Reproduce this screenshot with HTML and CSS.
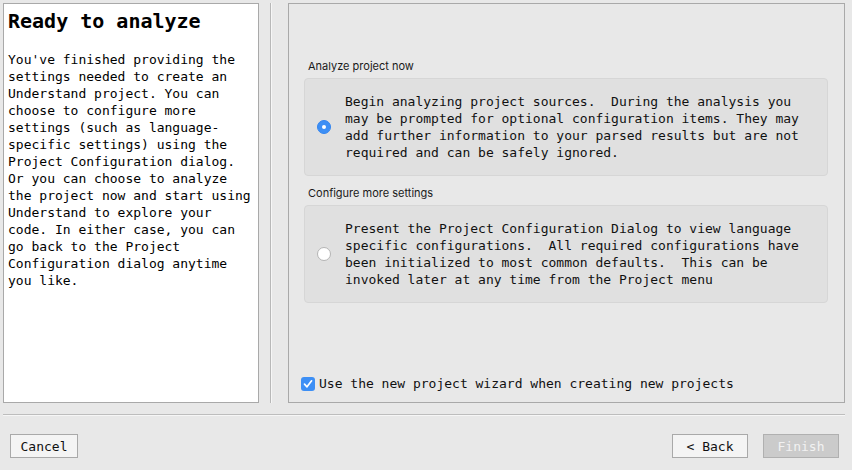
FILE: index.html
```html
<!DOCTYPE html>
<html>
<head>
<meta charset="utf-8">
<link rel="stylesheet" href="styles.css">
</head>
<body>
<div class="window">
  <div class="main">
    <div class="side">
      <h1 class="title">Ready to analyze</h1>
      <p class="intro">You've finished providing the settings needed to create an Understand project. You can choose to configure more settings (such as language-specific settings) using the Project Configuration dialog. Or you can choose to analyze the project now and start using Understand to explore your code. In either case, you can go back to the Project Configuration dialog anytime you like.</p>
    </div>
    <div class="vsep"></div>
    <div class="content">
      <div class="group-label">Analyze project now</div>
      <div class="group">
        <span class="radio checked"></span>
        <div class="group-text">Begin analyzing project sources.&nbsp; During the analysis you<br>may be prompted for optional configuration items. They may<br>add further information to your parsed results but are not<br>required and can be safely ignored.</div>
      </div>
      <div class="group-label second">Configure more settings</div>
      <div class="group">
        <span class="radio"></span>
        <div class="group-text">Present the Project Configuration Dialog to view language<br>specific configurations.&nbsp; All required configurations have<br>been initialized to most common defaults.&nbsp; This can be<br>invoked later at any time from the Project menu</div>
      </div>
      <div class="check-row">
        <span class="checkbox"><svg width="14" height="14" viewBox="0 0 14 14"><path d="M3.5 7.2 L6 9.8 L10.6 3.8" fill="none" stroke="#fff" stroke-width="1.7" stroke-linecap="round" stroke-linejoin="round"/></svg></span>
        <span class="check-label">Use the new project wizard when creating new projects</span>
      </div>
    </div>
  </div>
  <div class="hsep"></div>
  <div class="footer">
    <button class="btn cancel">Cancel</button>
    <div class="nav">
      <button class="btn back">&lt; Back</button>
      <button class="btn finish" disabled>Finish</button>
    </div>
  </div>
</div>
</body>
</html>
```

FILE: styles.css
```css
html, body {
  margin: 0;
  padding: 0;
  background: #e8e8e8;
  width: 852px;
  height: 470px;
  overflow: hidden;
}
.window {
  padding-top: 3px;
  font-family: "DejaVu Sans Mono", "Liberation Mono", monospace;
  font-size: 13px;
  color: #111;
}
.main {
  display: flex;
  height: 400px;
  padding-left: 3px;
}
.side {
  width: 256px;
  background: #fff;
  border: 1px solid #a9a9a9;
  padding: 5px 4px;
  box-sizing: border-box;
}
.title {
  margin: 0;
  font-size: 20px;
  line-height: 24px;
  font-weight: bold;
  color: #000;
}
.intro {
  margin: 18px 0 0;
  line-height: 17px;
  color: #000;
}
.vsep {
  width: 1px;
  margin-left: 11px;
  margin-right: 0;
  background: #b8b8b8;
  border-right: 1px solid #f6f6f6;
}
.content {
  margin-left: 16px;
  width: 557px;
  box-sizing: border-box;
  border: 1px solid #a9a9a9;
  padding: 55px 16px 10px 15px;
  display: flex;
  flex-direction: column;
}
.group-label {
  font-family: "Inter", "Liberation Sans", sans-serif;
  font-size: 11px;
  line-height: 14px;
  color: #1a1a1a;
  padding-left: 4px;
  margin-bottom: 5px;
}
.group-label.second {
  margin-top: 10px;
}
.group {
  display: flex;
  align-items: center;
  background: #e0e0e0;
  border: 1px solid #d6d6d6;
  border-radius: 4px;
  padding: 14px 10px 14px 12px;
  width: 524px;
  box-sizing: border-box;
}
.group-text {
  line-height: 17px;
  color: #111;
  white-space: nowrap;
}
.radio {
  width: 14px;
  height: 14px;
  border-radius: 50%;
  box-sizing: border-box;
  border: 1px solid #b4b4b4;
  background: #fff;
  margin-right: 14px;
  flex: none;
  position: relative;
}
.radio.checked {
  background: #3d8ff5;
  border-color: #3385f0;
}
.radio.checked::after {
  content: "";
  position: absolute;
  left: 4px;
  top: 4px;
  width: 4px;
  height: 4px;
  border-radius: 50%;
  background: #fff;
}
.check-row {
  margin-top: auto;
  display: flex;
  align-items: center;
  margin-left: -3px;
  line-height: 17px;
}
.checkbox {
  width: 14px;
  height: 14px;
  border-radius: 3px;
  background: #3d8ff5;
  margin-right: 4px;
  display: flex;
}
.hsep {
  margin: 11px 7px 0 3px;
  height: 1px;
  background: #bdbdbd;
  border-bottom: 1px solid #f6f6f6;
}
.footer {
  display: flex;
  justify-content: space-between;
  padding: 18px 13px 0 10px;
}
.nav {
  display: flex;
  gap: 15px;
}
.btn {
  font-family: "DejaVu Sans Mono", "Liberation Mono", monospace;
  font-size: 13px;
  height: 24px;
  padding: 0;
  border: 1px solid #a9a9a9;
  background: #f4f4f4;
  color: #111;
  box-sizing: border-box;
}
.cancel {
  width: 68px;
}
.back, .finish {
  width: 76px;
}
.finish {
  background: #cbcbcb;
  border-color: #b0b0b0;
  color: #f2f2f2;
}
```
